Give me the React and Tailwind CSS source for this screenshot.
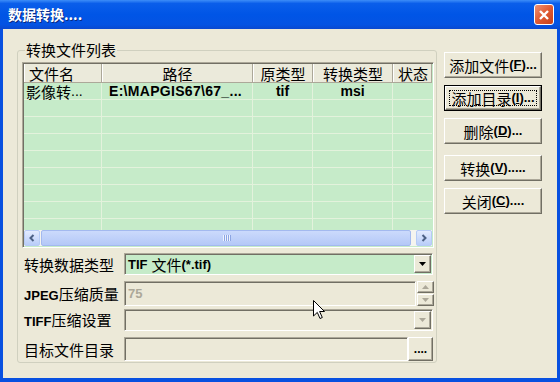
import React from 'react';

const cjk = "font-['Noto_Sans_CJK_SC',sans-serif]";
const lat = "font-['Liberation_Sans',Arial,sans-serif]";
const raised =
    'bg-[#ece9d8] border border-t-white border-l-white border-r-[#716f64] border-b-[#716f64] shadow-[inset_-1px_-1px_0_#aca899]';
const sunken =
    'border border-t-[#aca899] border-l-[#aca899] border-r-white border-b-white shadow-[inset_1px_1px_0_#716f64]';

const columns = [
    { w: 'w-[78px]', label: '文件名', align: 'justify-start pl-[4px]' },
    { w: 'w-[151px]', label: '路径', align: 'justify-center' },
    { w: 'w-[60px]', label: '原类型', align: 'justify-center' },
    { w: 'w-[80px]', label: '转换类型', align: 'justify-center' },
    { w: 'w-[39px]', label: '状态', align: 'justify-start pl-[4px]' },
];

const buttons = [
    { text: '添加文件', key: 'F', tail: '...', mt: 'mt-0' },
    { text: '添加目录', key: 'I', tail: '...', mt: 'mt-[7px]', focused: true },
    { text: '删除', key: 'D', tail: '...', mt: 'mt-[7px]' },
    { text: '转换', key: 'V', tail: '.....', mt: 'mt-[11px]' },
    { text: '关闭', key: 'C', tail: '....', mt: 'mt-[7px]' },
];

function Acc({ k, tail }) {
    return (
        <span className={`${lat} font-bold text-[13px]`}>
            (<span className="underline">{k}</span>){tail}
        </span>
    );
}

function Triangle({ down = true, disabled }) {
    return (
        <svg width="7" height="4" viewBox="0 0 7 4">
            <path d={down ? 'M0 0 L7 0 L3.5 4 Z' : 'M0 4 L7 4 L3.5 0 Z'} fill={disabled ? '#aca899' : '#000'} />
        </svg>
    );
}

function Combo({ children, disabled }) {
    return (
        <div className={`${sunken} w-[309px] h-[22px] flex items-center ${disabled ? 'bg-[#ece9d8]' : 'bg-[#c6ebc9]'}`}>
            <div className="flex-1 pl-[3px] flex items-center leading-none">{children}</div>
            <div className={`${raised} w-[17px] h-[18px] mr-[1px] flex items-center justify-center`}>
                <Triangle disabled={disabled} />
            </div>
        </div>
    );
}

function ScrollBtn({ dir }) {
    return (
        <div className="w-[16px] h-full rounded-[2px] border border-[#b6cbf5] bg-[linear-gradient(180deg,#e3ebfe,#b9cdf9)] flex items-center justify-center">
            <svg width="6" height="8" viewBox="0 0 6 8">
                <path
                    d={dir === 'left' ? 'M4.5 1 L1.5 4 L4.5 7' : 'M1.5 1 L4.5 4 L1.5 7'}
                    stroke="#4d6185"
                    strokeWidth="2"
                    fill="none"
                />
            </svg>
        </div>
    );
}

export default function App() {
    const rows = Array.from({ length: 9 });

    return (
        <div className={`${cjk} relative w-[560px] h-[382px] flex flex-col bg-[#0850e0] overflow-hidden`}>
            {/* title bar */}
            <div className="h-[29px] flex items-center justify-between pl-[8px] pr-[6px] bg-[linear-gradient(180deg,#3d8df8_0%,#0a5eea_12%,#0055e6_50%,#0453e3_85%,#0a48cf_100%)]">
                <span className="text-white font-bold text-[14px] [text-shadow:1px_1px_0_#0a2a80]">数据转换....</span>
                <div className="w-[20px] h-[21px] rounded-[3px] border border-white bg-[linear-gradient(135deg,#ef9274,#df5a32_50%,#c8401a)] flex items-center justify-center">
                    <svg width="10" height="10" viewBox="0 0 10 10">
                        <path d="M1 1 L9 9 M9 1 L1 9" stroke="#fff" strokeWidth="2.4" />
                    </svg>
                </div>
            </div>

            {/* body */}
            <div className="flex-1 mx-[3px] mb-[4px] bg-[#ece9d8] flex pt-[21px] pl-[14px]">
                {/* group box */}
                <div className="relative w-[420px] h-[313px] border border-[#d0d0bf] rounded-[3px] pt-[11px] pl-[4px]">
                    <span className="absolute left-[7px] -top-[11px] bg-[#ece9d8] px-[1px] text-[15px] leading-[20px] text-black">
                        转换文件列表
                    </span>

                    {/* list view */}
                    <div className={`${sunken} w-[412px] h-[186px] p-[1px] flex flex-col bg-[#c6ebc9]`}>
                        <div className="flex h-[19px] bg-[#ebeadb] border-b border-[#aca899]">
                            {columns.map((c) => (
                                <div
                                    key={c.label}
                                    className={`${c.w} flex items-center ${c.align} text-[15px] leading-none border-r border-r-[#aca899] border-l border-l-white`}
                                >
                                    {c.label}
                                </div>
                            ))}
                        </div>
                        <div className="flex-1 overflow-hidden">
                            {rows.map((_, i) => (
                                <div key={i} className="flex h-[17px] border-b border-[#e3f2dc]">
                                    <div className="w-[78px] border-r border-[#e3f2dc] flex items-center pl-[2px] text-[15px] leading-none whitespace-nowrap">
                                        {i === 0 && (
                                            <>
                                                影像转<span className={`${lat} text-[14px]`}>...</span>
                                            </>
                                        )}
                                    </div>
                                    <div className={`w-[151px] border-r border-[#e3f2dc] flex items-center pl-[7px] ${lat} font-bold text-[14px] tracking-[0.3px] whitespace-nowrap`}>
                                        {i === 0 ? 'E:\\MAPGIS67\\67_...' : ''}
                                    </div>
                                    <div className={`w-[60px] border-r border-[#e3f2dc] flex items-center justify-center ${lat} font-bold text-[14px]`}>
                                        {i === 0 ? 'tif' : ''}
                                    </div>
                                    <div className={`w-[80px] border-r border-[#e3f2dc] flex items-center justify-center ${lat} font-bold text-[14px]`}>
                                        {i === 0 ? 'msi' : ''}
                                    </div>
                                    <div className="w-[39px]" />
                                </div>
                            ))}
                        </div>
                        {/* horizontal scrollbar */}
                        <div className="h-[16px] flex bg-[#f5f4ef]">
                            <ScrollBtn dir="left" />
                            <div className="flex-1 ml-[1px] mr-[5px] rounded-[2px] border border-[#a3b9ef] bg-[linear-gradient(180deg,#cbdafc,#b4c8f7)] flex items-center justify-center gap-[1px]">
                                {[0, 1, 2, 3].map((g) => (
                                    <span key={g} className="w-[1px] h-[6px] bg-[#eef3fe] shadow-[1px_0_0_#8ca5e3]" />
                                ))}
                            </div>
                            <ScrollBtn dir="right" />
                        </div>
                    </div>

                    {/* settings */}
                    <div className="mt-[5px] flex flex-col text-[15px] leading-none">
                        <div className="flex items-center h-[22px]">
                            <span className="w-[102px] pl-[2px]">转换数据类型</span>
                            <Combo>
                                <span className={`${lat} font-bold text-[13px]`}>TIF</span>
                                <span className="ml-[4px]">文件</span>
                                <span className={`${lat} font-bold text-[13px]`}>(*.tif)</span>
                            </Combo>
                        </div>

                        <div className="flex items-center h-[25px] mt-[6px]">
                            <span className="w-[102px] pl-[2px]">
                                <span className={`${lat} font-bold text-[13px]`}>JPEG</span>压缩质量
                            </span>
                            <div className={`${sunken} w-[292px] h-[25px] bg-[#ece9d8] flex items-center pl-[3px]`}>
                                <span className={`${lat} font-bold text-[13px] text-[#aca899]`}>75</span>
                            </div>
                            <div className="ml-[1px] flex flex-col">
                                <div className={`${raised} w-[17px] h-[12px] flex items-center justify-center`}>
                                    <Triangle down={false} disabled />
                                </div>
                                <div className={`${raised} w-[17px] h-[12px] mt-[1px] flex items-center justify-center`}>
                                    <Triangle disabled />
                                </div>
                            </div>
                        </div>

                        <div className="flex items-center h-[22px] mt-[3px]">
                            <span className="w-[102px] pl-[2px]">
                                <span className={`${lat} font-bold text-[13px]`}>TIFF</span>压缩设置
                            </span>
                            <Combo disabled />
                        </div>

                        <div className="flex items-center h-[24px] mt-[6px]">
                            <span className="w-[102px] pl-[2px]">目标文件目录</span>
                            <div className={`${sunken} w-[284px] h-[24px] bg-[#ece9d8]`} />
                            <div className={`${raised} w-[25px] h-[24px] flex items-center justify-center ${lat} font-bold text-[12px]`}>
                                ....
                            </div>
                        </div>
                    </div>
                </div>

                {/* buttons */}
                <div className="ml-[7px] pt-[2px] flex flex-col">
                    {buttons.map((b) => (
                        <div
                            key={b.key}
                            className={`${b.mt} w-[98px] h-[26px] ${b.focused ? 'border border-black' : ''}`}
                        >
                            <div className={`${raised} w-full h-full flex items-center justify-center relative`}>
                                {b.focused && (
                                    <span className="absolute inset-[3px] border border-dotted border-black" />
                                )}
                                <span className="text-[15px] leading-none">{b.text}</span>
                                <Acc k={b.key} tail={b.tail} />
                            </div>
                        </div>
                    ))}
                </div>
            </div>

            {/* mouse cursor */}
            <svg className="absolute left-[313px] top-[300px]" width="13" height="20" viewBox="0 0 13 20">
                <path d="M0.5 0.5 L0.5 16 L4.3 12.4 L7 18.5 L9.3 17.5 L6.6 11.5 L11.5 11.5 Z" fill="#fff" stroke="#000" strokeWidth="1" />
            </svg>
        </div>
    );
}
